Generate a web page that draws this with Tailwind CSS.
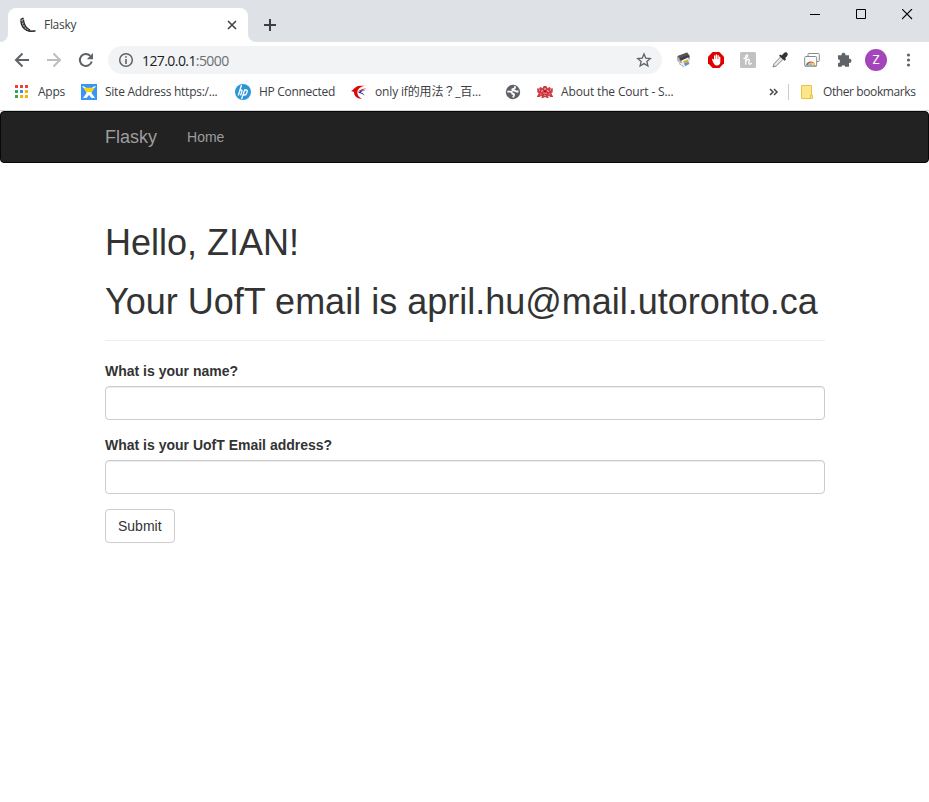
<!DOCTYPE html>
<html lang="en">
<head>
<meta charset="utf-8">
<title>Flasky</title>
<script src="https://cdn.jsdelivr.net/npm/@tailwindcss/browser@4"></script>
</head>
<body class="bg-white w-[929px] h-[802px] overflow-hidden font-['Open_Sans','Noto_Sans_CJK_TC',sans-serif] text-[12px] text-[#3c4043]">
<!-- Tab strip -->
<header class="h-[42px] bg-[#dee1e6] flex items-end">
  <svg class="w-2 h-[34px] shrink-0" viewBox="0 0 8 34"><path d="M8 26v8H0a8 8 0 0 0 8-8z" fill="#fff"/></svg>
  <div class="w-[240px] h-[34px] bg-white rounded-t-lg flex items-center pl-3 pr-2">
    <svg class="size-4 shrink-0" viewBox="0 0 16 16"><path d="M.5 2.500 3.500 1l.8 1-.5 1C4 7 6.500 11 10 13l6 .8c-3 1.500-7 1.500-9.500-.2C3 11.500.5 7 .5 2.500z" fill="#999"/><path d="M.5 2.500 3.500 1M.8 3.500C1 8 3.500 12 7 13.500c2.500 1 5.500 1 8.500.4M3.600 3c.2 4 2.900 8 6.400 10" stroke="#111" stroke-width="1.100" fill="none"/><path d="m1.500 5.500 2-.6M2.600 8l1.600-.7M4 10.500l1.600-1M6 12.500l1.500-1" stroke="#222" stroke-width=".8"/></svg>
    <span class="ml-2 w-[176px] tracking-[-0.3px] whitespace-nowrap">Flasky</span>
    <svg class="size-4 shrink-0 ml-1" viewBox="0 0 16 16"><path d="m4 4 8 8m0-8-8 8" stroke="#45494d" stroke-width="1.700"/></svg>
  </div>
  <svg class="w-2 h-[34px] shrink-0" viewBox="0 0 8 34"><path d="M0 26v8h8a8 8 0 0 1-8-8z" fill="#fff"/></svg>
  <svg class="size-4 mb-[9px] ml-1.5 shrink-0" viewBox="0 0 16 16"><path d="M8 2v12M2 8h12" stroke="#3c4043" stroke-width="2"/></svg>
  <div class="ml-auto flex self-start pt-[9px] pr-4 gap-[35px]">
    <svg class="size-[11px]" viewBox="0 0 11 11"><path d="M0 5.500h10" stroke="#000"/></svg>
    <svg class="size-[11px]" viewBox="0 0 11 11"><path d="M.5.5h9v9h-9z" stroke="#000" fill="none"/></svg>
    <svg class="size-[11px]" viewBox="0 0 11 11"><path d="m0 0 10 10M10 0 0 10" stroke="#000" stroke-width="1.100"/></svg>
  </div>
</header>
<!-- Toolbar -->
<div class="h-[36px] flex items-center pl-[14px] pr-3">
  <div class="flex gap-4 w-[94px] shrink-0">
    <svg class="size-4" viewBox="0 0 16 16"><path d="M15 8H2m6.500-6.500L2 8l6.500 6.500" stroke="#5f6368" stroke-width="2" fill="none"/></svg>
    <svg class="size-4" viewBox="0 0 16 16"><path d="M1 8h13M7.500 1.500 14 8l-6.500 6.500" stroke="#bbbdbf" stroke-width="2" fill="none"/></svg>
    <svg class="size-4" viewBox="0 0 16 16"><path d="M13.700 9.500a6 6 0 1 1-1.400-5.600" stroke="#5f6368" stroke-width="2" fill="none"/><path d="M15 1v6.200H8.800z" fill="#5f6368"/></svg>
  </div>
  <div class="w-[554px] h-7 shrink-0 rounded-full bg-[#f1f3f4] flex items-center pl-[10px] pr-[10px]">
    <svg class="size-4 shrink-0" viewBox="0 0 16 16"><circle cx="8" cy="8" r="6.300" stroke="#5f6368" stroke-width="1.500" fill="none"/><path d="M8 7v5M8 4.200v1.600" stroke="#5f6368" stroke-width="1.600"/></svg>
    <span class="ml-2 text-[14px] tracking-[-0.58px] text-[#202124] whitespace-nowrap">127.0.0.1<span class="text-[#6b6f74]">:5000</span></span>
    <svg class="size-4 shrink-0 ml-auto" viewBox="0 0 16 16"><path d="m8 1.900 1.750 4.200 4.550.4-3.450 3 1.050 4.450L8 11.600l-3.900 2.350L5.150 9.500 1.700 6.500l4.550-.4z" stroke="#5f6368" stroke-width="1.300" fill="none"/></svg>
  </div>
  <div class="flex items-center gap-4 ml-[14px]">
    <svg class="size-4 shrink-0" viewBox="0 0 16 16"><path d="m1 4.500 10.500-4 2.500 3.500-.5 4L5 11.500 1.500 9z" fill="#999"/><path d="m1.500 4 9.500-3.500 2 3L4.500 7z" fill="#555"/><path d="m3.500 6.500 9-3.500 1 2-8.500 4z" fill="#3d3d3d"/><path d="m1 5 3 4 1 2.500L1.500 9z" fill="#bbb"/><path d="m5.500 8.500 6.500-3 2.500 6-5.500 3.500-3-1z" fill="#eceff3"/><path d="m7 9.500 4.500-2 1.500 2.500-5 1.500z" fill="#e6a62c"/><path d="m8 11.500 4.500-1.500.7 2-4 2z" fill="#4c8fe0"/><path d="m3 11.500 5 3.500" stroke="#aaa"/></svg>
    <svg class="size-4 shrink-0" viewBox="0 0 16 16"><path d="M4.700 0h6.600L16 4.700v6.600L11.300 16H4.700L0 11.300V4.700z" fill="#df0000"/><path d="M4 7.500a.8.8 0 0 1 1.300-.4l.7 1V3.900a.65.65 0 0 1 1.300 0V7h.4V3a.7.7 0 0 1 1.400 0v4h.4V3.700a.65.65 0 0 1 1.300 0v3.500h.3V5a.6.6 0 0 1 1.200 0v5c0 2.300-1.200 3.500-3.300 3.500C6.500 13.500 5.500 11.500 4 7.500z" fill="#fff"/></svg>
    <svg class="size-4 shrink-0" viewBox="0 0 16 16"><rect width="16" height="16" rx="1.500" fill="#c1c1c1"/><path d="M3.500 6.500C6 6.500 8 5 7.600 3.600 7.200 2.500 5.800 3 5.800 5v7.800M5.900 9.500C7 7 9.800 6.300 9.300 8.600c-.4 1.800-.9 3.600.4 3.600.8 0 1.500-.6 2-1.200" stroke="#fff" stroke-width="1.300" fill="none"/></svg>
    <svg class="size-4 shrink-0" viewBox="0 0 16 16"><path d="m8.700 4.800 2.500 2.500-7 6.700-3.200 1 1-3.200z" fill="#e8e8e8" stroke="#777" stroke-width=".9"/><path d="m7 3.800 1.400-1.300 1.500 1C11.500 1 13.500-.5 15 .8s.8 3-1.800 5.200l.8 1.400-1.400 1.400z" fill="#333"/></svg>
    <svg class="size-4 shrink-0" viewBox="0 0 16 16"><rect x="4" y="1.500" width="11.300" height="8" rx="1" fill="#fff" stroke="#888"/><rect x=".7" y="4.500" width="12" height="9.500" rx="1" fill="#fff" stroke="#888"/><path d="M2.300 13a4.500 4.500 0 0 1 8.800 0z" fill="#df4130"/><path d="M2.300 13q0-1.500.9-2.500L6.500 13z" fill="#32a350"/><path d="M11.200 13q0-1.300-.7-2.300H7V13z" fill="#fac70d"/><path d="M4.700 13a2 2 0 0 1 4 0z" fill="#4285f4" stroke="#fff" stroke-width=".7"/><path d="M.7 14h12" stroke="#888"/></svg>
    <svg class="size-4 shrink-0" viewBox="0 0 16 16"><path d="M2 3.300h3.600a2 2 0 1 1 3.800 0H13v3.600a2 2 0 1 1 0 3.900v3.900H9.300a2 2 0 0 0-3.800 0H2v-3.500a2 2 0 0 0 0-4z" fill="#5f6368"/></svg>
  </div>
  <div class="size-[22px] shrink-0 ml-[13px] rounded-full bg-[#a545bb] text-white flex items-center justify-center font-[Roboto,sans-serif]">Z</div>
  <svg class="size-4 shrink-0 ml-[13px]" viewBox="0 0 16 16" fill="#5f6368"><circle cx="8.500" cy="3" r="1.600"/><circle cx="8.500" cy="8" r="1.600"/><circle cx="8.500" cy="13" r="1.600"/></svg>
</div>
<!-- Bookmarks bar -->
<div class="h-[33px] border-b border-[#d5d6d8] flex items-center pb-[4px] pl-[14px] whitespace-nowrap">
  <div class="w-[67px] shrink-0 flex items-center gap-[10px]">
    <svg class="size-[14px]" viewBox="0 0 14 14"><path d="M1 0h3v3H1zM6 0h3v3H6zM11 0h3v3h-3z" fill="#ea4335"/><path d="M1 5h3v3H1zM1 10h3v3H1z" fill="#34a853"/><path d="M6 5h3v3H6z" fill="#4285f4"/><path d="M11 5h3v3h-3zM6 10h3v3H6zM11 10h3v3h-3z" fill="#f4b400"/></svg>
    <span class="tracking-[-0.25px]">Apps</span>
  </div>
  <div class="w-[154px] shrink-0 flex items-center gap-2">
    <svg class="size-4 shrink-0" viewBox="0 0 16 16"><path d="M0 0h16v16H0z" fill="#3795fb"/><path d="M5 7h6l-.5 2L14 14h-3.500L8 11l-2.500 3H2l3.500-5z" fill="#fff"/><path d="m1.500 2.500 3 1.200h7l3-1.200L11 8H5z" fill="#f9d70c"/><path d="m1.500 2.500 3 1.200M14.500 2.500l-3 1.200" stroke="#fff" stroke-width="1.200"/></svg>
    <span class="tracking-[-0.25px]">Site Address https:/...</span>
  </div>
  <div class="w-[116px] shrink-0 flex items-center gap-2">
    <svg class="size-4 shrink-0" viewBox="0 0 16 16"><circle cx="8" cy="8" r="8" fill="#2e96d6"/><path d="M6.500 1 3.300 11.500M4.700 6H6q1.300 0 .9 1.200L5.600 11.500M9.800 5.500 6.600 15M9.500 6h1.800q1.200 0 .9 1.200l-.9 2.800q-.3 1-1.500 1H8.200" fill="none" stroke="#fff" stroke-width="1.300"/></svg>
    <span class="tracking-[-0.3px]">HP Connected</span>
  </div>
  <div class="w-[154px] shrink-0 flex items-center gap-2">
    <svg class="size-4 shrink-0" viewBox="0 0 16 16"><path d="M0 7c3-1.500 4-5 9-5.300h4.500C9 3 6.500 5 6.300 8c0 3 1.700 5.500 4.500 6.700C6 15 3 12 3 8z" fill="#d9090d"/><path d="M15.500 4.500c-4 .2-7 1-8.500 3.500L12 5.800z" fill="#d9090d"/><path d="M7 9c2-2.500 5-3.200 8.500-3.200-3 .8-5 1.700-6 2.800 2 .2 3.500 1.200 4 3.200C11.500 9.800 9.500 8.800 7 9z" fill="#242b8d"/></svg>
    <span class="tracking-[-0.15px]">only if的用法？_百...</span>
  </div>
  <svg class="size-4 shrink-0" viewBox="0 0 16 16"><circle cx="8" cy="8" r="7.200" fill="#5f6368"/><path d="M2.300 7.600h3.200c1.200 0 1.500.4 1.500 1.400s.5 1 1.300 1c.9 0 .9.6.6 1.500L8 13.500M10 2.300v1.200c0 1-.6 1.300-1.500 1.300-1 0-1.500.4-1.200 1.200.3.700 1 .7 2 .7 1.300 0 1.500.8 2.200.8h2" stroke="#fff" stroke-width="1.800" fill="none"/></svg>
  <div class="w-[230px] shrink-0 ml-4 flex items-center gap-2">
    <svg class="size-4 shrink-0" viewBox="0 0 16 16"><path d="m0 5 1-1 1 1 1-2 1.500.5 1 1L6 3l.8-1h2.400l.8 1 .5 1.500 1-1L13 3l1 2 1-1 1 1-.5 2 .5 1-1.500 1 .5 2 1 1v1h-3l-1-1.500-1 1.500 1 1h-2L8 13l-2 1H4l1-1-1-1.500L3 13H0v-1l1-1 .5-2L0 8l.5-1z" fill="#cf3a42"/><path d="M2.500 5.500v1M13.500 5.500v1M4.500 8l1-2M11.500 8l-1-2M7 5h2M6.500 9h3M3 9.500l1 1M13 9.500l-1 1M8 11v1" stroke="#fff" stroke-width=".9" opacity=".8"/><path d="M7 6.500h2v2H7z" fill="#9c1620"/></svg>
    <span class="tracking-[-0.15px]">About the Court - S...</span>
  </div>
  <svg class="w-[10px] h-[10px] shrink-0 ml-[2px]" viewBox="0 0 10 10"><path d="m1 2 3 3-3 3m4-6 3 3-3 3" stroke="#4b4f53" stroke-width="1.600" fill="none"/></svg>
  <div class="w-px h-4 bg-[#c8cacd] ml-[9px] shrink-0"></div>
  <svg class="size-4 shrink-0 ml-[10px]" viewBox="0 0 16 16"><path d="M2.500 1.500h10v9.500h1v3.500h-11z" fill="#fde58c" stroke="#e9c63e"/><path d="M11.500 14.500V11h1" stroke="#e9c63e" fill="none"/></svg>
  <span class="ml-2 tracking-[-0.4px]">Other bookmarks</span>
</div>
<!-- Page -->
<div class="font-['Liberation_Sans',Arial,sans-serif] text-[14px] leading-[20px] text-[#333]">
  <nav class="h-[52px] bg-[#222] border border-[#080808] rounded-[4px] flex items-center pl-[104px] text-[#9d9d9d]">
    <a class="text-[18px]">Flasky</a><a class="ml-[30px]">Home</a>
  </nav>
  <main class="w-[720px] ml-[105px] pt-[60px]">
    <div class="border-b border-[#eee] pb-[19px] mb-5 text-[36px] leading-[39px]">
      <h1 class="mb-5">Hello, ZIAN!</h1>
      <h1 class="whitespace-nowrap">Your UofT email is april.hu@mail.utoronto.ca</h1>
    </div>
    <form>
      <label class="block font-bold mb-[5px]" for="name">What is your name?</label>
      <input id="name" class="block w-full h-[34px] border border-[#ccc] rounded-[4px] shadow-[inset_0_1px_1px_rgba(0,0,0,0.075)] mb-[15px]">
      <label class="block font-bold mb-[5px]" for="email">What is your UofT Email address?</label>
      <input id="email" class="block w-full h-[34px] border border-[#ccc] rounded-[4px] shadow-[inset_0_1px_1px_rgba(0,0,0,0.075)] mb-[15px]">
      <button type="button" class="h-[34px] px-3 border border-[#ccc] rounded-[4px] bg-white">Submit</button>
    </form>
  </main>
</div>
</body>
</html>
